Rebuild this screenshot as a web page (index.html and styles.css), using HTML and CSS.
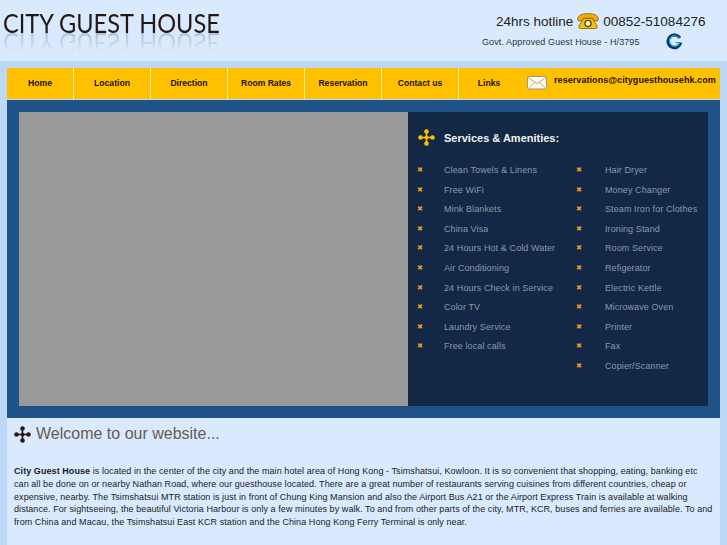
FILE: index.html
```html
<!DOCTYPE html>
<html lang="en">
<head>
    <meta charset="UTF-8">
    <meta name="viewport" content="width=device-width, initial-scale=1.0">
    <title>City Guest House</title>
    <link rel="stylesheet" href="styles.css">
</head>
<body>

    <div class="header">
        <div class="logo">
            <div class="logo-text">CITY GUEST HOUSE</div>
            <div class="logo-mirror" aria-hidden="true">CITY GUEST HOUSE</div>
        </div>
        <div class="contact">
            <div class="hotline">
                <span>24hrs hotline</span>
                <svg class="phone" width="22" height="16" viewBox="0 0 22 16">
                    <path d="M0.7 6.5C0.7 2 5 0.7 11 0.7s10.300 1.300 10.300 5.800c0 1-.5 1.500-1.500 1.500h-2.600c-.8 0-1.200-.4-1.200-1.200V5.200H6v1.600C6 7.600 5.600 8 4.800 8H2.200C1.200 8 .7 7.500.7 6.500z" fill="#f7ad00" stroke="#8c6a1c" stroke-width="0.9"/>
                    <path d="M6.500 5.500h9l4.500 7.500c.6 1.500 0 2.500-1.500 2.500h-15c-1.500 0-2.100-1-1.500-2.500z" fill="#ffc000" stroke="#8c6a1c" stroke-width="0.9"/>
                    <circle cx="11" cy="10.500" r="3.100" fill="#fff1c4" stroke="#5a4a20" stroke-width="1.300"/>
                </svg>
                <span>00852-51084276</span>
            </div>
            <div class="approved">
                <span>Govt. Approved Guest House - H/3795</span>
                <svg class="g-icon" width="17" height="17" viewBox="0 0 17 17">
                    <path d="M13.800 5A6.300 6.300 0 1 0 14.600 9.500" fill="none" stroke="#0a2c94" stroke-width="3.200"/>
                    <path d="M13.300 5.300A5.300 5.300 0 1 0 13.800 9.500H9.500" fill="none" stroke="#1fb56e" stroke-width="1.200"/>
                </svg>
            </div>
        </div>
    </div>

    <div class="page">
        <div class="nav">
            <a class="nav-item">Home</a>
            <a class="nav-item">Location</a>
            <a class="nav-item">Direction</a>
            <a class="nav-item">Room Rates</a>
            <a class="nav-item">Reservation</a>
            <a class="nav-item">Contact us</a>
            <a class="nav-item links">Links</a>
            <div class="nav-mail">
                <svg width="20" height="14" viewBox="0 0 20 14">
                    <rect x="0.5" y="0.5" width="19" height="12.500" rx="1.500" fill="#fff9ea" stroke="#a09684"/>
                    <path d="M1 1.500l9 6 9-6M1.500 12.500l6-6.500M18.500 12.500l-6-6.500" fill="none" stroke="#a89e88" stroke-width="0.8"/>
                </svg>
                <span>reservations@cityguesthousehk.com</span>
            </div>
        </div>

        <div class="banner">
            <div class="slide"></div>
            <div class="services">
                <h2 class="services-title">
                    <svg class="clover" width="17" height="17" viewBox="0 0 17 17">
                        <g fill="#ffc000">
                            <circle cx="8.500" cy="2.500" r="2.300"/><circle cx="8.500" cy="14.500" r="2.300"/>
                            <circle cx="2.500" cy="8.500" r="2.300"/><circle cx="14.500" cy="8.500" r="2.300"/>
                            <rect x="7.700" y="2" width="1.600" height="13"/><rect x="2" y="7.700" width="13" height="1.600"/>
                            <circle cx="8.500" cy="8.500" r="2"/>
                        </g>
                    </svg>
                    Services &amp; Amenities:
                </h2>
                <div class="amenities">
                    <ul class="amenity-list first">
                        <li>Clean Towels &amp; Linens</li>
                        <li>Free WiFi</li>
                        <li>Mink Blankets</li>
                        <li>China Visa</li>
                        <li>24 Hours Hot &amp; Cold Water</li>
                        <li>Air Conditioning</li>
                        <li>24 Hours Check in Service</li>
                        <li>Color TV</li>
                        <li>Laundry Service</li>
                        <li>Free local calls</li>
                    </ul>
                    <ul class="amenity-list second">
                        <li>Hair Dryer</li>
                        <li>Money Changer</li>
                        <li>Steam Iron for Clothes</li>
                        <li>Ironing Stand</li>
                        <li>Room Service</li>
                        <li>Refigerator</li>
                        <li>Electric Kettle</li>
                        <li>Microwave Oven</li>
                        <li>Printer</li>
                        <li>Fax</li>
                        <li>Copier/Scanner</li>
                    </ul>
                </div>
            </div>
        </div>

        <div class="welcome">
            <h1 class="welcome-title">
                <svg class="clover" width="17" height="17" viewBox="0 0 17 17">
                    <g fill="#2a1c14">
                        <circle cx="8.500" cy="2.500" r="2.300"/><circle cx="8.500" cy="14.500" r="2.300"/>
                        <circle cx="2.500" cy="8.500" r="2.300"/><circle cx="14.500" cy="8.500" r="2.300"/>
                        <rect x="7.700" y="2" width="1.600" height="13"/><rect x="2" y="7.700" width="13" height="1.600"/>
                        <circle cx="8.500" cy="8.500" r="2"/>
                    </g>
                </svg>
                Welcome to our website...
            </h1>
            <p class="intro"><b>City Guest House</b> is located in the center of the city and the main hotel area of Hong Kong - Tsimshatsui, Kowloon. It is so convenient that shopping, eating, banking etc can all be done on or nearby Nathan Road, where our guesthouse located. There are a great number of restaurants serving cuisines from different countries, cheap or expensive, nearby. The Tsimshatsui MTR station is just in front of Chung King Mansion and also the Airport Bus A21 or the Airport Express Train is available at walking distance. For sightseeing, the beautiful Victoria Harbour is only a few minutes by walk. To and from other parts of the city, MTR, KCR, buses and ferries are available. To and from China and Macau, the Tsimshatsui East KCR station and the China Hong Kong Ferry Terminal is only near.</p>
        </div>
    </div>

</body>
</html>
```

FILE: styles.css
```css
body {
    margin: 0;
    height: 545px;
    overflow: hidden;
    background-color: #bcd8f6;
    font-family: "Liberation Sans", Arial, sans-serif;
}

.header {
    display: flex;
    justify-content: space-between;
    height: 61px;
    background-color: #d9eaff;
    overflow: hidden;
}

.logo {
    padding: 12px 0 0 3px;
}

.logo-text,
.logo-mirror {
    font-family: "Lato", sans-serif;
    font-size: 27.5px;
    line-height: 21px;
    color: #231815;
    white-space: nowrap;
    transform-origin: left center;
}

.logo-text {
    transform: scaleX(0.857);
}

.logo-mirror {
    transform: scale(0.857, -1);
    opacity: 0.2;
    -webkit-mask-image: linear-gradient(to top, #000, transparent 90%);
    mask-image: linear-gradient(to top, #000, transparent 90%);
}

.contact {
    width: 245px;
}

.hotline {
    display: flex;
    align-items: center;
    gap: 4px;
    margin-top: 13px;
    padding-left: 14px;
    font-size: 13.5px;
    color: #222;
    white-space: nowrap;
}

.phone {
    flex: none;
}

.approved {
    position: relative;
    margin-top: 8px;
    font-size: 9px;
    letter-spacing: 0.1px;
    color: #333;
}

.g-icon {
    position: absolute;
    left: 184px;
    top: -4px;
}

.page {
    margin: 7px 7px 0 7px;
}

.nav {
    display: flex;
    height: 31px;
    background-color: #ffc000;
    border-bottom: 1px solid #c8d8e8;
}

.nav-item {
    flex: none;
    width: 76px;
    line-height: 31px;
    text-align: center;
    font-size: 8.6px;
    font-weight: bold;
    color: #1c1400;
    border-right: 1px solid #ffe9a8;
}

.nav-item:first-child {
    width: 66px;
}

.nav-item.links {
    width: 60px;
    border-right: none;
}

.nav-mail {
    display: flex;
    gap: 7px;
    padding: 7px 0 0 8px;
    font-size: 9px;
    font-weight: bold;
    letter-spacing: 0.06px;
    color: #1c1400;
    white-space: nowrap;
}

.nav-mail svg {
    margin-top: 1px;
}

.banner {
    display: flex;
    padding: 12px;
    height: 294px;
    background-color: #1f5288;
    background-image: radial-gradient(rgba(255, 255, 255, 0.02) 1px, transparent 1px);
    background-size: 4px 4px;
}

.slide {
    width: 389px;
    background-color: #999;
    flex: none;
}

.services {
    flex: 1;
    background-color: #122844;
    padding: 17px 0 0 10px;
}

.services-title {
    display: flex;
    align-items: center;
    gap: 9px;
    margin: 0 0 18px 0;
    font-size: 11px;
    font-weight: bold;
    color: #f2f2f2;
}

.amenities {
    display: flex;
}

.amenity-list {
    list-style: none;
    margin: 0;
    padding: 0;
    font-size: 9px;
    letter-spacing: 0.1px;
    color: #8c98a8;
}

.amenity-list.first {
    width: 159px;
}

.amenity-list li {
    position: relative;
    height: 19.6px;
    line-height: 13px;
    padding-left: 26px;
}

.amenity-list.second li {
    padding-left: 28px;
}

.amenity-list li::before {
    content: "\2716";
    position: absolute;
    left: -1px;
    top: 0;
    font-family: "DejaVu Sans", sans-serif;
    font-size: 7px;
    color: #ec9a28;
}

.welcome {
    padding: 7px 7px 0 7px;
    height: 120px;
    background-color: #d9eaff;
}

.welcome-title {
    display: flex;
    align-items: center;
    gap: 5px;
    margin: 0 0 22px 0;
    font-size: 16px;
    font-weight: normal;
    color: #6a5a50;
}

.intro {
    margin: 0;
    font-size: 9px;
    line-height: 12.8px;
    letter-spacing: 0.07px;
    color: #222;
}
```
